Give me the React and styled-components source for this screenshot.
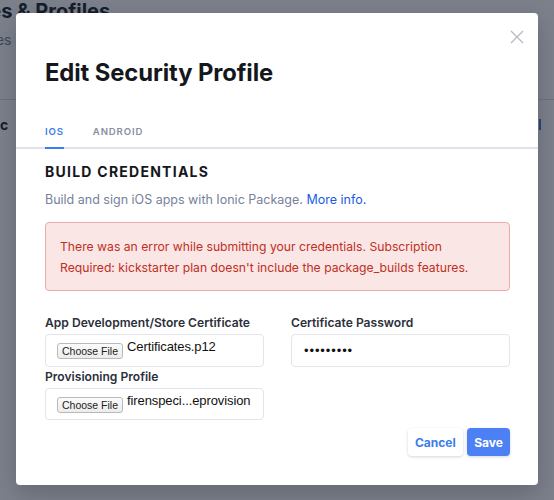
import styled, { createGlobalStyle } from "styled-components";

const GlobalStyle = createGlobalStyle`
  * { box-sizing: border-box; }
  body {
    margin: 0;
    font-family: Inter, "Noto Sans", sans-serif;
    background: #fff;
  }
`;

const Page = styled.div`
  position: relative;
  height: 500px;
  overflow: hidden;
  background: #fff;
`;

const PageHead = styled.header`
  margin-left: -103px;
  margin-top: -1px;
`;

const PageTitle = styled.h1`
  margin: 0;
  font-size: 20px;
  line-height: 24px;
  font-weight: 700;
  color: #1c1f26;
`;

const PageSub = styled.p`
  margin: 7px 0 0 6px;
  font-size: 14px;
  line-height: 20px;
  color: #7a8293;
`;

const PageTabs = styled.div`
  margin-top: 49px;
  height: 50px;
  border-top: 1px solid #d8dbe2;
  display: flex;
  align-items: center;
  justify-content: space-between;
`;

const PageTab = styled.span`
  margin-left: 74px;
  font-size: 14px;
  font-weight: 700;
  color: #1c1f26;
`;

const PageMark = styled.span`
  width: 2px;
  height: 11px;
  margin-right: 13px;
  background: #3b7cf0;
`;

const Overlay = styled.div`
  position: absolute;
  inset: 0;
  background: rgba(20, 28, 48, 0.56);
  padding: 13px 16px 15px;
  display: flex;
`;

const Modal = styled.div`
  position: relative;
  width: 522px;
  height: 472px;
  background: #fff;
  border-radius: 4px;
  box-shadow: 0 8px 24px rgba(0, 0, 0, 0.2);
  display: flex;
  flex-direction: column;
`;

const Close = styled.button`
  position: absolute;
  top: 17px;
  right: 14px;
  width: 14px;
  height: 14px;
  padding: 0;
  border: 0;
  background: none;
  display: flex;
  svg { display: block; }
`;

const Title = styled.h2`
  margin: 0;
  padding: 45px 29px 0;
  font-size: 23.8px;
  line-height: 29px;
  font-weight: 700;
  color: #15171c;
  letter-spacing: -0.1px;
`;

const TabBar = styled.nav`
  margin-top: 37px;
  padding: 0 29px;
  display: flex;
  gap: 29px;
  border-bottom: 2px solid #dfe2e8;
`;

const Tab = styled.span`
  padding-bottom: 8px;
  margin-bottom: -2px;
  font-size: 9.6px;
  line-height: 15px;
  font-weight: 600;
  letter-spacing: 0.85px;
  color: ${(p) => (p.$active ? "#3b7cf0" : "#8790a3")};
  border-bottom: 2px solid ${(p) => (p.$active ? "#3b7cf0" : "transparent")};
`;

const Body = styled.div`
  padding: 14px 28px 0 29px;
  display: flex;
  flex-direction: column;
`;

const Heading = styled.h3`
  margin: 0;
  font-size: 14px;
  line-height: 17px;
  font-weight: 700;
  letter-spacing: 1.25px;
  color: #15171c;
`;

const Desc = styled.p`
  margin: 10px 0 0;
  font-size: 12.5px;
  line-height: 20px;
  color: #76819a;

  a {
    color: #1a5ce6;
    text-decoration: none;
  }
`;

const ErrorBox = styled.div`
  margin-top: 12px;
  height: 69px;
  padding: 13px 14px;
  background: #fbe6e6;
  border: 1px solid #efaaa8;
  border-radius: 4px;
  font-size: 12.2px;
  line-height: 21px;
  color: #bf2f22;
`;

const Fields = styled.div`
  margin-top: 24px;
  display: grid;
  grid-template-columns: 1fr 1fr;
  column-gap: 27px;
`;

const Column = styled.div`
  display: flex;
  flex-direction: column;
`;

const Label = styled.label`
  display: block;
  font-size: 12.1px;
  line-height: 16px;
  font-weight: 600;
  color: #2b303b;
  margin-bottom: 3px;
`;

const Box = styled.div`
  height: 32.5px;
  border: 1px solid #e3e5eb;
  border-radius: 4px;
  padding: ${(p) => (p.$file ? "4px 11px 0" : "0 12px")};
  display: flex;
  align-items: ${(p) => (p.$file ? "flex-start" : "center")};
  gap: 4px;
  margin-bottom: ${(p) => (p.$gap ? "2px" : "0")};
  font-family: "Liberation Sans", Arial, sans-serif;
`;

const ChooseButton = styled.span`
  margin-top: 4px;
  width: 66px;
  height: 16px;
  border: 1px solid #b9b9b9;
  border-radius: 3px;
  background: linear-gradient(#fbfbfb, #ececec);
  font-size: 10.5px;
  line-height: 14px;
  text-align: center;
  color: #222;
  flex-shrink: 0;
`;

const FileName = styled.span`
  font-size: 13px;
  line-height: 16px;
  color: #111;
  letter-spacing: -0.1px;
  white-space: nowrap;
`;

const Dots = styled.span`
  font-size: 13px;
  letter-spacing: 0.9px;
  color: #111;
  padding-top: 1px;
`;

const Actions = styled.div`
  margin-top: 8px;
  display: flex;
  justify-content: flex-end;
  gap: 4.5px;
`;

const Button = styled.button`
  height: 28px;
  padding: 0 7px;
  border: 0;
  border-radius: 4px;
  font-family: Inter, sans-serif;
  font-size: 12px;
  font-weight: 700;
  color: ${(p) => (p.$primary ? "#fff" : "#3b7cf0")};
  background: ${(p) => (p.$primary ? "#4d80f4" : "#fff")};
  box-shadow: 0 1px 3px rgba(20, 30, 60, 0.18);
`;

export default function App() {
  return (
    <>
      <GlobalStyle />
      <Page>
        <PageHead>
          <PageTitle>Certificates &amp; Profiles</PageTitle>
          <PageSub>Your certificates give access to native builds.</PageSub>
          <PageTabs>
            <PageTab>Basic</PageTab>
            <PageMark />
          </PageTabs>
        </PageHead>
        <Overlay>
          <Modal>
            <Close aria-label="Close">
              <svg width="14" height="14" viewBox="0 0 14 14">
                <path d="M1 1L13 13M13 1L1 13" stroke="#b5b9c1" strokeWidth="1.3" fill="none" />
              </svg>
            </Close>
            <Title>Edit Security Profile</Title>
            <TabBar>
              <Tab $active>IOS</Tab>
              <Tab>ANDROID</Tab>
            </TabBar>
            <Body>
              <Heading>BUILD CREDENTIALS</Heading>
              <Desc>
                Build and sign iOS apps with Ionic Package. <a href="#">More info.</a>
              </Desc>
              <ErrorBox>
                There was an error while submitting your credentials. Subscription
                Required: kickstarter plan doesn't include the package_builds features.
              </ErrorBox>
              <Fields>
                <Column>
                  <Label>App Development/Store Certificate</Label>
                  <Box $file $gap>
                    <ChooseButton>Choose File</ChooseButton>
                    <FileName>Certificates.p12</FileName>
                  </Box>
                  <Label>Provisioning Profile</Label>
                  <Box $file>
                    <ChooseButton>Choose File</ChooseButton>
                    <FileName>firenspeci...eprovision</FileName>
                  </Box>
                </Column>
                <Column>
                  <Label>Certificate Password</Label>
                  <Box>
                    <Dots>•••••••••</Dots>
                  </Box>
                </Column>
              </Fields>
              <Actions>
                <Button>Cancel</Button>
                <Button $primary>Save</Button>
              </Actions>
            </Body>
          </Modal>
        </Overlay>
      </Page>
    </>
  );
}
